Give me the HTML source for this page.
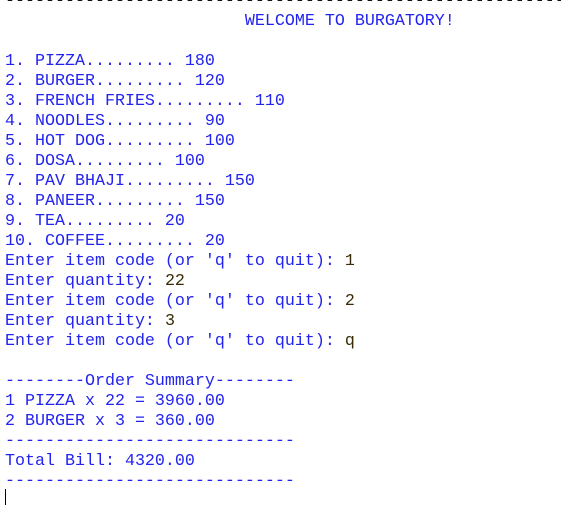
<!DOCTYPE html>
<html><head><meta charset="utf-8"><style>
html,body{margin:0;padding:0;background:#fff;width:561px;height:506px;overflow:hidden}
pre{position:absolute;left:5px;top:-8px;margin:0;font-family:"Liberation Mono",monospace;font-size:16.67px;line-height:20px;color:#2323f0;white-space:pre}
.k{color:#111}
.i{color:#3a2a05}
.cur{position:absolute;left:5px;top:489px;width:1px;height:16px;background:#000}
</style></head><body>
<pre><span class="k">--------------------------------------------------------</span>
                        WELCOME TO BURGATORY!

1. PIZZA......... 180
2. BURGER......... 120
3. FRENCH FRIES......... 110
4. NOODLES......... 90
5. HOT DOG......... 100
6. DOSA......... 100
7. PAV BHAJI......... 150
8. PANEER......... 150
9. TEA......... 20
10. COFFEE......... 20
Enter item code (or 'q' to quit): <span class="i">1</span>
Enter quantity: <span class="i">22</span>
Enter item code (or 'q' to quit): <span class="i">2</span>
Enter quantity: <span class="i">3</span>
Enter item code (or 'q' to quit): <span class="i">q</span>

--------Order Summary--------
1 PIZZA x 22 = 3960.00
2 BURGER x 3 = 360.00
-----------------------------
Total Bill: 4320.00
-----------------------------</pre>
<div class="cur"></div>
</body></html>
